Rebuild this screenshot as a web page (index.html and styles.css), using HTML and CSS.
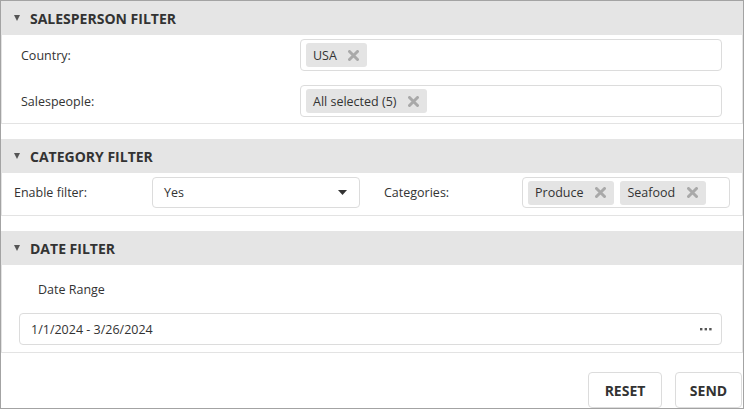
FILE: index.html
```html
<!DOCTYPE html>
<html>
<head>
<meta charset="utf-8">
<link rel="stylesheet" href="styles.css">
</head>
<body>
<div class="frame">
  <section class="group">
    <div class="group-head"><span class="tri"></span>SALESPERSON FILTER</div>
    <div class="group-body body-sales">
      <div class="row">
        <div class="label">Country:</div>
        <div class="tagbox wide">
          <span class="tag">USA <svg class="x" width="11" height="11" viewBox="0 0 11 11"><path d="M1.5 1.5l8 8M9.5 1.5l-8 8" stroke="#a9a9a9" stroke-width="3" stroke-linecap="round"/></svg></span>
        </div>
      </div>
      <div class="row">
        <div class="label">Salespeople:</div>
        <div class="tagbox wide">
          <span class="tag">All selected (5) <svg class="x" width="11" height="11" viewBox="0 0 11 11"><path d="M1.5 1.5l8 8M9.5 1.5l-8 8" stroke="#a9a9a9" stroke-width="3" stroke-linecap="round"/></svg></span>
        </div>
      </div>
    </div>
  </section>

  <section class="group">
    <div class="group-head"><span class="tri"></span>CATEGORY FILTER</div>
    <div class="group-body body-cat">
      <div class="label l-enable">Enable filter:</div>
      <div class="select">
        <span>Yes</span>
        <svg class="caret" width="9" height="5" viewBox="0 0 9 5"><path d="M0 0h9L4.5 5z" fill="#333"/></svg>
      </div>
      <div class="label l-cat">Categories:</div>
      <div class="tagbox cat">
        <span class="tag">Produce <svg class="x" width="11" height="11" viewBox="0 0 11 11"><path d="M1.5 1.5l8 8M9.5 1.5l-8 8" stroke="#a9a9a9" stroke-width="3" stroke-linecap="round"/></svg></span>
        <span class="tag">Seafood <svg class="x" width="11" height="11" viewBox="0 0 11 11"><path d="M1.5 1.5l8 8M9.5 1.5l-8 8" stroke="#a9a9a9" stroke-width="3" stroke-linecap="round"/></svg></span>
      </div>
    </div>
  </section>

  <section class="group">
    <div class="group-head"><span class="tri"></span>DATE FILTER</div>
    <div class="group-body body-date">
      <div class="date-label">Date Range</div>
      <div class="date-input">
        <span>1/1/2024 - 3/26/2024</span>
        <svg class="dots" width="12" height="3" viewBox="0 0 12 3"><rect x="0" y="0" width="2.4" height="2.4" fill="#555"/><rect x="4.6" y="0" width="2.4" height="2.4" fill="#555"/><rect x="9.2" y="0" width="2.4" height="2.4" fill="#555"/></svg>
      </div>
    </div>
  </section>

  <div class="actions">
    <button class="btn btn-reset">RESET</button>
    <button class="btn btn-send">SEND</button>
  </div>
</div>
</body>
</html>
```

FILE: styles.css
```css
* { box-sizing: border-box; }
html, body { margin: 0; padding: 0; background: #fff; }
body {
  font-family: "Open Sans", "Noto Sans", sans-serif;
  font-size: 12.5px;
  color: #333;
}
.frame {
  width: 744px;
  height: 409px;
  border: 1px solid #a3a3a3;
  overflow: hidden;
  display: flex;
  flex-direction: column;
}
.group {
  border-left: 1px solid #e3e3e3;
  border-right: 1px solid #e3e3e3;
  border-bottom: 1px solid #e3e3e3;
  margin-bottom: 15px;
}
.group-head {
  height: 34px;
  background: #e5e5e5;
  display: flex;
  align-items: center;
  padding-left: 13px;
  font-weight: 700;
  font-size: 14px;
  color: #333;
  margin-left: -1px;
  margin-right: -1px;
}
.tri {
  width: 0; height: 0;
  border-left: 3.5px solid transparent;
  border-right: 3.5px solid transparent;
  border-top: 6px solid #555;
  margin-right: 10px;
  margin-top: -1px;
}
.group-body { background: #fff; }
.body-sales {
  height: 88px;
  padding: 4px 0 0 19px;
  display: flex;
  flex-direction: column;
  gap: 14px;
}
.row { display: flex; align-items: center; height: 32px; }
.row .label { width: 279px; }
.tagbox {
  border: 1px solid #dcdcdc;
  border-radius: 4px;
  display: flex;
  align-items: center;
  gap: 6px;
  padding-left: 5px;
}
.wide { width: 422px; height: 32px; }
.tag {
  background: #e4e4e4;
  border-radius: 3px;
  height: 24px;
  display: inline-flex;
  align-items: center;
  padding: 0 8px 0 7px;
  color: #333;
}
.x { margin-left: 11px; flex: none; }
.body-cat {
  height: 42px;
  display: flex;
  align-items: flex-start;
  padding-top: 4px;
  padding-left: 12px;
}
.l-enable { width: 138px; line-height: 31px; }
.select {
  width: 208px;
  height: 31px;
  border: 1px solid #dcdcdc;
  border-radius: 4px;
  display: flex;
  align-items: center;
  justify-content: space-between;
  padding: 0 12px 0 11px;
}
.l-cat { margin-left: 24px; width: 138px; line-height: 31px; }
.cat { width: 208px; height: 31px; padding-left: 5px; }
.cat .x { margin-left: 12px; }
.body-date {
  height: 87px;
  padding: 16px 0 0 17px;
}
.date-label { padding-left: 19px; height: 32px; line-height: 17px; }
.date-input {
  width: 703px;
  height: 32px;
  border: 1px solid #dcdcdc;
  border-radius: 4px;
  display: flex;
  align-items: center;
  justify-content: space-between;
  padding: 0 9px 0 11px;
}
.actions {
  display: flex;
  justify-content: flex-end;
  gap: 13px;
  padding-right: 1px;
  margin-top: 4px;
}
.btn {
  height: 36px;
  border: 1px solid #dcdcdc;
  border-radius: 4px;
  background: #fff;
  font-family: "Open Sans", sans-serif;
  font-weight: 700;
  font-size: 14px;
  color: #333;
  padding: 0;
}
.btn-reset { width: 74px; }
.btn-send { width: 67px; }
```
